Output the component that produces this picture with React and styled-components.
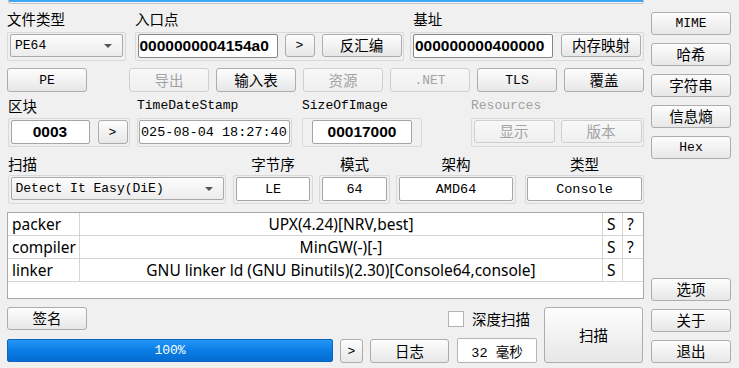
import React from "react";
import styled, { createGlobalStyle, css } from "styled-components";

const LATIN = `"Liberation Mono", "Noto Sans CJK SC", monospace`;
const CJK = `"Noto Sans CJK SC", "Liberation Mono", sans-serif`;

const GlobalStyle = createGlobalStyle`
  html, body {
    margin: 0;
    padding: 0;
    background: #f0f0f0;
  }
  body {
    font-family: ${CJK};
  }
`;

const fontFor = ({ $latin }) =>
  $latin
    ? css`
        font-family: ${LATIN};
        font-size: 13px;
      `
    : css`
        font-family: ${CJK};
        font-size: 14.5px;
      `;

const Window = styled.div`
  width: 739px;
  height: 368px;
  overflow: hidden;
  box-sizing: border-box;
  padding-left: 7px;
  display: grid;
  grid-template-columns: 637px 80px;
  column-gap: 7px;
`;

const Main = styled.div`
  display: flex;
  flex-direction: column;
`;

const Side = styled.div`
  height: 368px;
  box-sizing: border-box;
  padding: 12px 0 5px;
  display: flex;
  flex-direction: column;
  gap: 8px;
`;

const TopStrip = styled.div`
  margin-left: 1px;
  height: 3px;
  border: 1px solid #c3c3c3;
  border-top: none;
  border-radius: 0 0 3px 3px;
  background: linear-gradient(#3ea7f5 0 2px, #fafafa 2px);
`;

const Row = styled.div`
  display: flex;
  align-items: flex-end;
  gap: ${({ $gap }) => $gap || 0}px;
  margin-top: ${({ $mt }) => $mt || 0}px;
`;

const Field = styled.div`
  display: flex;
  flex-direction: column;
  width: ${({ $w }) => $w}px;
  margin-left: ${({ $ml }) => $ml || 0}px;
`;

const FieldLabel = styled.div`
  ${fontFor};
  height: 22px;
  line-height: 22px;
  white-space: nowrap;
  color: ${({ $dim }) => ($dim ? "#a0a0a0" : "#000")};
  text-align: ${({ $align }) => $align || "left"};
`;

const Frame = styled.div`
  height: 29px;
  box-sizing: border-box;
  margin-top: ${({ $mt }) => $mt || 0}px;
  border: 1px solid #d9d9d9;
  border-radius: 2px;
  padding-top: 1px;
  display: flex;
  align-items: flex-start;
  justify-content: center;
  gap: ${({ $gap }) => $gap || 0}px;
`;

const Button = styled.button`
  ${fontFor};
  width: ${({ $w }) => $w || 80}px;
  height: ${({ $h }) => $h || 23}px;
  margin: 0;
  margin-left: ${({ $ml }) => $ml || 0}px;
  padding: 0;
  flex-shrink: 0;
  box-sizing: border-box;
  border: 1px solid #adadad;
  border-radius: 3px;
  background: linear-gradient(#fdfdfd, #e7e7e7);
  color: #000;
  line-height: 1;
  &:disabled {
    color: #a3a3a3;
    border-color: #cfcfcf;
    background: linear-gradient(#f8f8f8, #efefef);
  }
`;

const SideButton = styled(Button)`
  margin-top: ${({ $push }) => ($push ? "auto" : "0")};
`;

const LineEdit = styled.div`
  width: ${({ $w }) => $w}px;
  height: 24px;
  flex-shrink: 0;
  box-sizing: border-box;
  border: 1px solid ${({ $dark }) => ($dark ? "#858585" : "#a6a6a6")};
  border-radius: 2px;
  background: #fff;
  padding: 0 1px;
  display: flex;
  align-items: center;
  justify-content: ${({ $center }) => ($center ? "center" : "flex-start")};
  overflow: hidden;
  white-space: nowrap;
  color: #000;
  ${({ $bold }) =>
    $bold
      ? css`
          font-family: "Liberation Sans", sans-serif;
          font-weight: bold;
          font-size: 15.5px;
        `
      : css`
          font-family: ${LATIN};
          font-size: 13.5px;
        `};
`;

const Combo = styled.div`
  width: ${({ $w }) => $w}px;
  height: 23px;
  box-sizing: border-box;
  border: 1px solid #a9a9a9;
  border-radius: 2px;
  background: linear-gradient(#fcfcfc, #ececec);
  padding: 0 10px 0 4px;
  display: flex;
  align-items: center;
  justify-content: space-between;
  font-family: ${LATIN};
  font-size: 13px;
  color: #000;
`;

const Arrow = styled.span`
  width: 0;
  height: 0;
  border-left: 4px solid transparent;
  border-right: 4px solid transparent;
  border-top: 4px solid #555;
`;

const Table = styled.div`
  margin-top: 8px;
  height: 87px;
  box-sizing: border-box;
  border: 1px solid #a9a9a9;
  background: #fff;
  display: grid;
  grid-template-columns: 72px 523px 20px 20px;
  grid-auto-rows: 23px;
  align-content: start;
`;

const Cell = styled.div`
  box-sizing: border-box;
  border-bottom: 1px solid #d4d4d4;
  border-right: ${({ $last }) => ($last ? "none" : "1px solid #d4d4d4")};
  display: flex;
  align-items: center;
  justify-content: ${({ $center }) => ($center ? "center" : "flex-start")};
  padding-left: ${({ $center }) => ($center ? 0 : 4)}px;
  font-family: "Noto Sans", sans-serif;
  font-size: 15.5px;
  color: #000;
  white-space: nowrap;
  overflow: hidden;
`;

const Bottom = styled.div`
  margin-top: 8px;
  display: flex;
  align-items: flex-start;
`;

const BottomLeft = styled.div`
  width: 530px;
  display: flex;
  flex-direction: column;
  gap: 9px;
`;

const BottomTop = styled.div`
  height: 23px;
  padding-right: 7px;
  display: flex;
  align-items: center;
  justify-content: space-between;
`;

const BottomBar = styled.div`
  height: 24px;
  display: flex;
  align-items: flex-start;
  gap: 7px;
`;

const CheckWrap = styled.label`
  display: flex;
  align-items: center;
  gap: 8px;
  font-family: ${CJK};
  font-size: 14.5px;
  color: #000;
`;

const CheckBox = styled.span`
  width: 16px;
  height: 16px;
  box-sizing: border-box;
  border: 1px solid #b3b3b3;
  background: #fff;
`;

const Progress = styled.div`
  width: 326px;
  height: 23px;
  box-sizing: border-box;
  border: 1px solid #0b63bd;
  border-radius: 2px;
  background: linear-gradient(#2696f6, #0a7ee6 50%, #056ccf);
  display: flex;
  align-items: center;
  justify-content: center;
  font-family: ${LATIN};
  font-size: 13px;
  color: #fff;
`;

const TimeBox = styled.div`
  width: 80px;
  height: 25px;
  margin-left: 1px;
  margin-top: -1px;
  box-sizing: border-box;
  border: 1px solid #b5b5b5;
  border-radius: 2px;
  background: #fff;
  display: flex;
  align-items: center;
  justify-content: center;
  font-family: ${LATIN};
  font-size: 13.5px;
  color: #000;
`;

const results = [
  { type: "packer", name: "UPX(4.24)[NRV,best]", s: "S", q: "?" },
  { type: "compiler", name: "MinGW(-)[-]", s: "S", q: "?" },
  { type: "linker", name: "GNU linker ld (GNU Binutils)(2.30)[Console64,console]", s: "S", q: "" },
];

const infoBoxes = [
  { label: "字节序", value: "LE", w: 80, box: 74, ml: 7 },
  { label: "模式", value: "64", w: 71, box: 65, ml: 6 },
  { label: "架构", value: "AMD64", w: 120, box: 114, ml: 6 },
  { label: "类型", value: "Console", w: 119, box: 115, ml: 9 },
];

export default function App() {
  return (
    <>
      <GlobalStyle />
      <Window>
        <Main>
          <TopStrip />

          <Row $mt={4}>
            <Field $w={119}>
              <FieldLabel>文件类型</FieldLabel>
              <Frame $mt={2}>
                <Combo $w={113}>
                  PE64
                  <Arrow />
                </Combo>
              </Frame>
            </Field>
            <Field $w={269} $ml={9}>
              <FieldLabel>入口点</FieldLabel>
              <Frame $mt={2} $gap={7}>
                <LineEdit $w={140} $bold $dark>
                  0000000004154a0
                </LineEdit>
                <Button $w={30} $latin>
                  &gt;
                </Button>
                <Button>反汇编</Button>
              </Frame>
            </Field>
            <Field $w={234} $ml={6}>
              <FieldLabel>&nbsp;基址</FieldLabel>
              <Frame $mt={2} $gap={8}>
                <LineEdit $w={140} $bold $dark>
                  000000000400000
                </LineEdit>
                <Button>内存映射</Button>
              </Frame>
            </Field>
          </Row>

          <Row $mt={7} $gap={7}>
            <Button $h={24} $latin>PE</Button>
            <Button $h={24} $ml={35} disabled>导出</Button>
            <Button $h={24}>输入表</Button>
            <Button $h={24} disabled>资源</Button>
            <Button $h={24} $latin disabled>.NET</Button>
            <Button $h={24} $latin>TLS</Button>
            <Button $h={24}>覆盖</Button>
          </Row>

          <Row $mt={3}>
            <Field $w={122} $ml={1}>
              <FieldLabel>区块</FieldLabel>
              <Frame $mt={1} $gap={8}>
                <LineEdit $w={79} $bold $center>
                  0003
                </LineEdit>
                <Button $w={30} $h={24} $latin>
                  &gt;
                </Button>
              </Frame>
            </Field>
            <Field $w={155} $ml={7}>
              <FieldLabel $latin>TimeDateStamp</FieldLabel>
              <Frame $mt={1}>
                <LineEdit $w={151}>025-08-04 18:27:40</LineEdit>
              </Frame>
            </Field>
            <Field $w={120} $ml={10}>
              <FieldLabel $latin>SizeOfImage</FieldLabel>
              <Frame $mt={1}>
                <LineEdit $w={100} $bold $center>
                  00017000
                </LineEdit>
              </Frame>
            </Field>
            <Field $w={173} $ml={49}>
              <FieldLabel $latin $dim>
                Resources
              </FieldLabel>
              <Frame $mt={1} $gap={6}>
                <Button $w={81} disabled>显示</Button>
                <Button $w={81} disabled>版本</Button>
              </Frame>
            </Field>
          </Row>

          <Row $mt={6}>
            <Field $w={218} $ml={1}>
              <FieldLabel>扫描</FieldLabel>
              <Frame>
                <Combo $w={213}>
                  Detect It Easy(DiE)
                  <Arrow />
                </Combo>
              </Frame>
            </Field>
            {infoBoxes.map((b) => (
              <Field key={b.label} $w={b.w} $ml={b.ml}>
                <FieldLabel $align="center">{b.label}</FieldLabel>
                <Frame>
                  <LineEdit $w={b.box} $center>
                    {b.value}
                  </LineEdit>
                </Frame>
              </Field>
            ))}
          </Row>

          <Table>
            {results.map((r) => (
              <React.Fragment key={r.type}>
                <Cell>{r.type}</Cell>
                <Cell $center>{r.name}</Cell>
                <Cell>{r.s}</Cell>
                <Cell $last>{r.q}</Cell>
              </React.Fragment>
            ))}
          </Table>

          <Bottom>
            <BottomLeft>
              <BottomTop>
                <Button>签名</Button>
                <CheckWrap>
                  <CheckBox />
                  深度扫描
                </CheckWrap>
              </BottomTop>
              <BottomBar>
                <Progress>100%</Progress>
                <Button $w={23} $h={24} $latin>
                  &gt;
                </Button>
                <Button $w={79} $h={24}>日志</Button>
                <TimeBox>32 毫秒</TimeBox>
              </BottomBar>
            </BottomLeft>
            <Button $w={99} $h={56} $ml={7}>
              扫描
            </Button>
          </Bottom>
        </Main>

        <Side>
          <SideButton $latin>MIME</SideButton>
          <SideButton>哈希</SideButton>
          <SideButton>字符串</SideButton>
          <SideButton>信息熵</SideButton>
          <SideButton $latin>Hex</SideButton>
          <SideButton $push>选项</SideButton>
          <SideButton>关于</SideButton>
          <SideButton>退出</SideButton>
        </Side>
      </Window>
    </>
  );
}
